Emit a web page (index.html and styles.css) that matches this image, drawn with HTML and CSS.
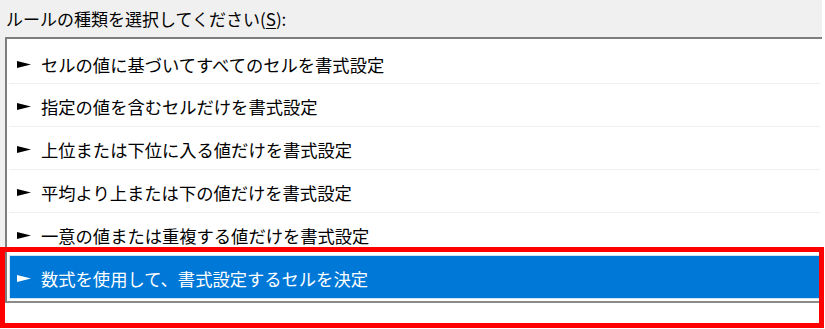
FILE: index.html
```html
<html>
<head>
    <meta charset="utf-8">
    <link rel="stylesheet" href="styles.css">
</head>
<body>
<div class="dialog">
    <div class="caption">ルールの種類を選択してください(<u>S</u>):</div>
    <div class="rule-list">
        <div class="rule">
            <svg class="pointer" viewBox="0 0 14 7"><polygon points="0,0 5,1.2 14,3.5 5,5.8 0,7"/></svg>
            <span>セルの値に基づいてすべてのセルを書式設定</span>
        </div>
        <div class="rule">
            <svg class="pointer" viewBox="0 0 14 7"><polygon points="0,0 5,1.2 14,3.5 5,5.8 0,7"/></svg>
            <span>指定の値を含むセルだけを書式設定</span>
        </div>
        <div class="rule">
            <svg class="pointer" viewBox="0 0 14 7"><polygon points="0,0 5,1.2 14,3.5 5,5.8 0,7"/></svg>
            <span>上位または下位に入る値だけを書式設定</span>
        </div>
        <div class="rule">
            <svg class="pointer" viewBox="0 0 14 7"><polygon points="0,0 5,1.2 14,3.5 5,5.8 0,7"/></svg>
            <span>平均より上または下の値だけを書式設定</span>
        </div>
        <div class="rule">
            <svg class="pointer" viewBox="0 0 14 7"><polygon points="0,0 5,1.2 14,3.5 5,5.8 0,7"/></svg>
            <span>一意の値または重複する値だけを書式設定</span>
        </div>
        <div class="rule selected">
            <svg class="pointer" viewBox="0 0 14 7"><polygon points="0,0 5,1.2 14,3.5 5,5.8 0,7"/></svg>
            <span>数式を使用して、書式設定するセルを決定</span>
        </div>
    </div>
</div>
<div class="highlight"></div>
</body>
</html>
```

FILE: styles.css
```css
body {
    margin: 0;
    width: 825px;
    height: 329px;
    background: #ffffff;
    position: relative;
    overflow: hidden;
    font-family: "Noto Sans CJK JP", "Noto Sans", sans-serif;
    color: #000000;
}

.dialog {
    width: 822px;
    background: #f0f0f0;
    padding-left: 5px;
    box-sizing: border-box;
}

.caption {
    height: 37px;
    font-size: 17px;
    line-height: 37px;
    padding-left: 1px;
    white-space: nowrap;
}

.caption u {
    text-underline-offset: 2px;
}

.rule-list {
    background: #ffffff;
    border-top: 2px solid #7e7e7e;
    border-left: 2px solid #7e7e7e;
    border-bottom: 2px solid #8a8a8a;
    padding: 3px 0 2px 0;
}

.rule {
    display: flex;
    align-items: center;
    height: 43px;
    margin: 0 2px;
    padding: 3px 0 0 8px;
    box-sizing: border-box;
    border-bottom: 1px solid #f0f0f0;
    font-size: 17.3px;
    white-space: nowrap;
}

.rule:first-child {
    height: 42px;
}

.pointer {
    width: 14px;
    height: 7px;
    margin-right: 10px;
    fill: #000000;
    flex: none;
}

.rule.selected {
    background: #0078d7;
    color: #ffffff;
    border: 1px solid #cde6f7;
    height: 44px;
    margin-top: -1px;
    padding-left: 7px;
}

.rule.selected .pointer {
    fill: #ffffff;
}

.highlight {
    position: absolute;
    left: 0;
    top: 247px;
    width: 824px;
    height: 81px;
    border: 5px solid #ff0000;
    box-sizing: border-box;
}
```
